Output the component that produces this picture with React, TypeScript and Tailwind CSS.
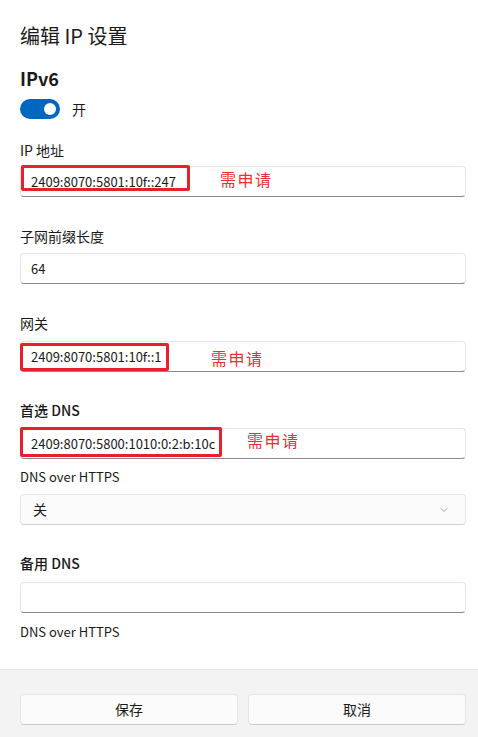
import React from "react";
import { ChevronDown } from "lucide-react";

const font = { fontFamily: '"Noto Sans CJK SC", "Noto Sans", sans-serif' };

interface FieldProps {
    value?: string;
    note?: { boxClass: string; textClass: string };
    className?: string;
}

const Field: React.FC<FieldProps> = ({ value, note, className }) => (
    <div
        className={`relative h-[31px] rounded-[4px] border border-[#e5e5e5] border-b-[#8a8a8a] bg-white flex items-center pl-[10px] text-[13px] text-[#1a1a1a] ${className ?? ""}`}
    >
        {value}
        {note && (
            <>
                <div className={`absolute border-[3px] border-[#e8202a] rounded-[2px] ${note.boxClass}`} />
                <span className={`absolute text-[16px] text-[#ea2e35] tracking-[1.5px] leading-none ${note.textClass}`}>
                    需申请
                </span>
            </>
        )}
    </div>
);

const Label: React.FC<{ children: React.ReactNode; className?: string; bold?: boolean; small?: boolean }> = ({
    children,
    className,
    bold,
    small,
}) => (
    <div
        className={`h-[20px] leading-[20px] ${small ? "text-[13px]" : "text-[14px]"} text-[#1a1a1a] ${bold ? "font-medium" : ""} ${className ?? ""}`}
    >
        {children}
    </div>
);

export default function App() {
    return (
        <div className="w-[478px] h-[737px] bg-white flex flex-col overflow-hidden" style={font}>
            <div className="pl-5 pr-[12px] pt-[22px] flex flex-col">
                <h1 className="h-[28px] leading-[28px] text-[20px] text-[#1a1a1a]">编辑 IP 设置</h1>
                <div className="mt-[15px] h-[26px] leading-[26px] text-[18px] font-semibold text-[#1a1a1a]">IPv6</div>

                {/* toggle */}
                <div className="mt-[8px] flex items-center h-[20px]">
                    <div className="w-[40px] h-[20px] rounded-full bg-[#0067c0] flex items-center justify-end pr-[4px]">
                        <div className="w-[12px] h-[12px] rounded-full bg-white" />
                    </div>
                    <span className="ml-[12px] text-[14px] text-[#1a1a1a]">开</span>
                </div>

                <Label className="mt-[21px]">IP 地址</Label>
                <Field
                    className="mt-[6px]"
                    value="2409:8070:5801:10f::247"
                    note={{
                        boxClass: "left-[0px] top-[-2px] w-[169px] h-[26px]",
                        textClass: "left-[199px] top-[4px]",
                    }}
                />

                <Label className="mt-[29px]">子网前缀长度</Label>
                <Field className="mt-[7px]" value="64" />

                <Label className="mt-[29px]">网关</Label>
                <Field
                    className="mt-[8px]"
                    value="2409:8070:5801:10f::1"
                    note={{
                        boxClass: "left-[-1px] top-[1px] w-[149px] h-[28px]",
                        textClass: "left-[190px] top-[8px]",
                    }}
                />

                <Label className="mt-[28px]" bold>
                    首选 DNS
                </Label>
                <Field
                    className="mt-[8px]"
                    value="2409:8070:5800:1010:0:2:b:10c"
                    note={{
                        boxClass: "left-[-1px] top-[-2px] w-[202px] h-[30px]",
                        textClass: "left-[226px] top-[3px]",
                    }}
                />

                <Label className="mt-[8px]" small>
                    DNS over HTTPS
                </Label>
                <div className="mt-[7px] h-[31px] rounded-[4px] border border-[#e5e5e5] border-b-[#d0d0d0] bg-[#fbfbfb] flex items-center justify-between pl-[12px] pr-[15px] text-[14px] text-[#1a1a1a]">
                    <span>关</span>
                    <ChevronDown size={12} strokeWidth={1.2} className="text-[#606060]" />
                </div>

                <Label className="mt-[28px]" bold>
                    备用 DNS
                </Label>
                <Field className="mt-[9px]" />

                <Label className="mt-[9px]" small>
                    DNS over HTTPS
                </Label>
            </div>

            <div className="mt-auto h-[68px] border-t border-[#e5e5e5] bg-[#f3f3f3] pl-5 pr-[12px] pt-[24px] flex gap-[10px]">
                <button className="flex-1 h-[31px] rounded-[4px] border border-[#e5e5e5] border-b-[#cccccc] bg-[#fbfbfb] text-[14px] text-[#1a1a1a]">
                    保存
                </button>
                <button className="flex-1 h-[31px] rounded-[4px] border border-[#e5e5e5] border-b-[#cccccc] bg-[#fbfbfb] text-[14px] text-[#1a1a1a]">
                    取消
                </button>
            </div>
        </div>
    );
}
